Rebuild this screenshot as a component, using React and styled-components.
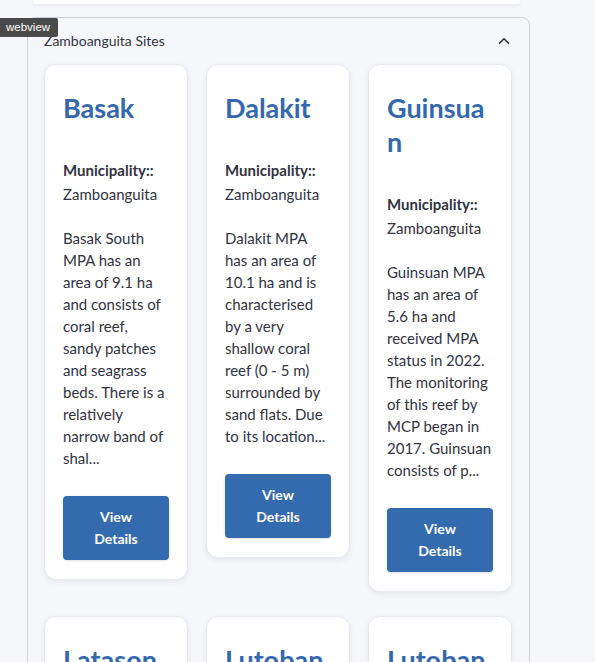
import React from 'react';
import styled, { createGlobalStyle } from 'styled-components';
import { ChevronUp } from 'lucide-react';

const sites = [
  {
    name: 'Basak',
    municipality: 'Zamboanguita',
    description:
      'Basak South MPA has an area of 9.1 ha and consists of coral reef, sandy patches and seagrass beds. There is a relatively narrow band of shal...',
  },
  {
    name: 'Dalakit',
    municipality: 'Zamboanguita',
    description:
      'Dalakit MPA has an area of 10.1 ha and is characterised by a very shallow coral reef (0 - 5 m) surrounded by sand flats. Due to its location...',
  },
  {
    name: 'Guinsuan',
    municipality: 'Zamboanguita',
    description:
      'Guinsuan MPA has an area of 5.6 ha and received MPA status in 2022. The monitoring of this reef by MCP began in 2017. Guinsuan consists of p...',
  },
  {
    name: 'Latason',
    municipality: 'Zamboanguita',
    description:
      'Latason MPA has an area of 6 ha and consists of a shallow reef flat and a sloping reef with sandy patches...',
  },
  {
    name: 'Lutoban',
    municipality: 'Zamboanguita',
    description:
      'Lutoban MPA lies north of the pier and consists of seagrass beds and a fringing coral reef...',
  },
  {
    name: 'Lutoban Pier',
    municipality: 'Zamboanguita',
    description:
      'Lutoban Pier MPA is a small reserve next to the pier with a sandy slope and patch reefs...',
  },
];

const App = () => {
  return (
    <Page>
      <GlobalStyle />
      <WebviewTag>webview</WebviewTag>
      <PrevCard />
      <Expander>
        <ExpanderHeader>
          <ExpanderTitle>Zamboanguita Sites</ExpanderTitle>
          <ChevronUp size={18} strokeWidth={2.2} color="#31333f" />
        </ExpanderHeader>
        <SiteGrid>
          {sites.map((site) => (
            <SiteCard key={site.name}>
              <SiteTitle>{site.name}</SiteTitle>
              <MetaLabel>Municipality::</MetaLabel>
              <MetaValue>{site.municipality}</MetaValue>
              <Description>{site.description}</Description>
              <DetailsButton>View Details</DetailsButton>
            </SiteCard>
          ))}
        </SiteGrid>
      </Expander>
    </Page>
  );
};

export default App;

const GlobalStyle = createGlobalStyle`
  html, body {
    margin: 0;
    padding: 0;
    background: #f5f7fb;
    font-family: Lato, "Liberation Sans", sans-serif;
    color: #31333f;
  }
`;

const Page = styled.div`
  position: relative;
  min-height: 100vh;
  padding-bottom: 40px;
`;

const WebviewTag = styled.div`
  position: absolute;
  top: 18px;
  left: 0;
  width: 58px;
  height: 19px;
  box-sizing: border-box;
  padding-left: 6px;
  background: #4a4a4a;
  color: #fff;
  font-family: "Liberation Sans", Arial, sans-serif;
  font-size: 11.5px;
  line-height: 19px;
  border-radius: 0 2px 2px 0;
  z-index: 2;
`;

const PrevCard = styled.div`
  width: 487px;
  height: 4px;
  margin-left: 33px;
  background: #fff;
  border-radius: 0 0 8px 8px;
  box-shadow: 0 1px 4px rgba(0, 0, 0, 0.08);
`;

const Expander = styled.section`
  width: 503px;
  box-sizing: border-box;
  margin: 13px 0 0 27px;
  border: 1px solid #cdd1d8;
  border-radius: 8px;
  background: #f5f7fb;
`;

const ExpanderHeader = styled.div`
  display: flex;
  align-items: center;
  justify-content: space-between;
  padding: 12px 16px 12px 16px;
  height: 22px;
`;

const ExpanderTitle = styled.span`
  font-size: 14px;
  line-height: 22px;
`;

const SiteGrid = styled.div`
  display: grid;
  grid-template-columns: repeat(3, 1fr);
  column-gap: 18px;
  row-gap: 24px;
  align-items: start;
  padding: 0 17px 24px 16px;
`;

const SiteCard = styled.div`
  display: flex;
  flex-direction: column;
  padding: 26px 18px 19px;
  background: #fff;
  border: 1px solid #e6e9ef;
  border-radius: 12px;
  box-shadow: 0 2px 6px rgba(0, 0, 0, 0.07);
  min-width: 0;
`;

const SiteTitle = styled.h2`
  margin: 0 0 33px;
  font-size: 27px;
  line-height: 34px;
  font-weight: 700;
  color: #3468ae;
  overflow-wrap: anywhere;
`;

const MetaLabel = styled.div`
  font-size: 15px;
  line-height: 24px;
  font-weight: 700;
`;

const MetaValue = styled.div`
  font-size: 15px;
  line-height: 24px;
`;

const Description = styled.p`
  margin: 21px 0 27px;
  font-size: 15px;
  line-height: 22px;
`;

const DetailsButton = styled.button`
  width: 100%;
  padding: 10px 20px;
  border: none;
  border-radius: 4px;
  background: #346aae;
  color: #fff;
  font-family: Lato, "Liberation Sans", sans-serif;
  font-size: 14px;
  font-weight: 700;
  line-height: 22px;
  box-shadow: 0 1px 3px rgba(0, 0, 0, 0.12);
  cursor: pointer;
`;
